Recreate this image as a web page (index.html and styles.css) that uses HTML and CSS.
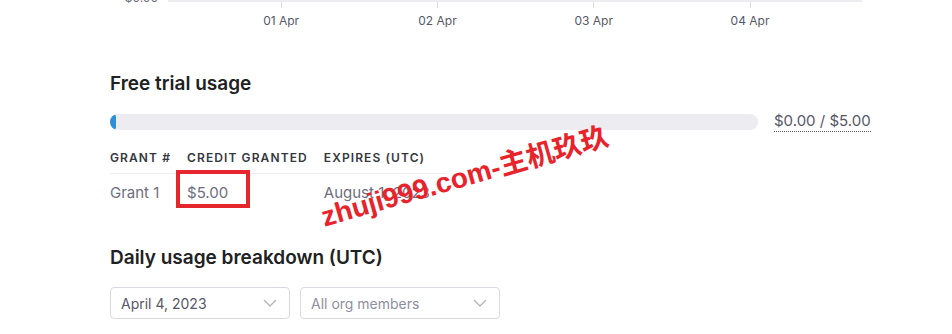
FILE: index.html
```html
<!DOCTYPE html>
<html lang="en">
<head>
<meta charset="utf-8">
<title>Usage</title>
<link rel="stylesheet" href="styles.css">
</head>
<body>
<main class="page">
  <section class="chart">
    <div class="ylabel">$0.00</div>
    <div class="plot">
      <div class="tick"><span class="tick-line"></span><span class="tick-label">01 Apr</span></div>
      <div class="tick"><span class="tick-line"></span><span class="tick-label">02 Apr</span></div>
      <div class="tick"><span class="tick-line"></span><span class="tick-label">03 Apr</span></div>
      <div class="tick"><span class="tick-line"></span><span class="tick-label">04 Apr</span></div>
    </div>
  </section>

  <h2 class="heading heading-trial">Free trial usage</h2>
  <div class="progress-row">
    <div class="progress"><div class="progress-fill"></div></div>
    <span class="progress-text">$0.00 / $5.00</span>
  </div>

  <table class="grants">
    <thead>
      <tr><th>Grant #</th><th>Credit granted</th><th>Expires (UTC)</th></tr>
    </thead>
    <tbody>
      <tr><td>Grant 1</td><td class="credit"><span class="highlight"></span>$5.00</td><td>August 1, 2023</td></tr>
    </tbody>
  </table>

  <h2 class="heading heading-daily">Daily usage breakdown (UTC)</h2>
  <div class="filters">
    <div class="select select-date"><span class="select-value">April 4, 2023</span>
      <svg class="chev" width="14" height="8" viewBox="0 0 14 8"><path d="M1 1l6 6 6-6" fill="none" stroke="#b4b4bd" stroke-width="1.3"/></svg>
    </div>
    <div class="select select-members"><span class="select-placeholder">All org members</span>
      <svg class="chev" width="14" height="8" viewBox="0 0 14 8"><path d="M1 1l6 6 6-6" fill="none" stroke="#b4b4bd" stroke-width="1.3"/></svg>
    </div>
  </div>

  <div class="watermark">zhuji999.com-主机玖玖</div>
</main>
</body>
</html>
```

FILE: styles.css
```css
* { box-sizing: border-box; }
html, body { margin: 0; padding: 0; background: #fff; }
body {
  font-family: Inter, "Noto Sans", "Liberation Sans", sans-serif;
  color: #353740;
  width: 952px;
  height: 334px;
  overflow: hidden;
}
.page {
  position: relative;
  padding-left: 110px;
  height: 334px;
}

/* chart axis */
.chart {
  display: flex;
  margin-top: -10px;
}
.ylabel {
  width: 58px;
  padding-right: 10px;
  text-align: right;
  font-size: 12px;
  line-height: 16px;
  color: #6e6e80;
}
.plot {
  margin-top: 10px;
  width: 694px;
  border-top: 2px solid #ececf1;
  display: grid;
  grid-template-columns: repeat(4, 156.3px);
  padding-left: 35px;
}
.tick {
  display: flex;
  flex-direction: column;
  align-items: center;
}
.tick-line {
  width: 1px;
  height: 6px;
  background: #dcdce2;
}
.tick-label {
  margin-top: 5px;
  font-size: 12px;
  line-height: 16px;
  color: #565869;
}

/* headings */
.heading {
  margin: 0;
  font-size: 19px;
  line-height: 24px;
  font-weight: 600;
  color: #202123;
}
.heading-trial { margin-top: 43px; }
.heading-daily { margin-top: 43px; }

/* progress */
.progress-row {
  display: flex;
  align-items: center;
  gap: 16px;
  margin-top: 15px;
}
.progress {
  width: 648px;
  height: 16px;
  border-radius: 8px;
  background: #ececf1;
  overflow: hidden;
}
.progress-fill {
  width: 6px;
  height: 16px;
  border-radius: 3px;
  background: #2e8fd8;
}
.progress-text {
  font-size: 15px;
  line-height: 20px;
  color: #565869;
  border-bottom: 1px dotted #565869;
}

/* table */
.grants {
  margin-top: 18px;
  border-collapse: collapse;
}
.grants th {
  text-align: left;
  font-size: 12px;
  font-weight: 600;
  letter-spacing: 1.1px;
  text-transform: uppercase;
  color: #353740;
  padding: 0 16px 7px 0;
  line-height: 16px;
  border-bottom: 1px solid #ececf1;
}
.grants th:last-child { padding-right: 4px; }
.grants td {
  font-size: 15px;
  line-height: 20px;
  color: #6e6e80;
  padding: 9px 16px 0 0;
}
.grants .credit { position: relative; }
.highlight {
  position: absolute;
  left: -11px;
  top: -4px;
  width: 74px;
  height: 38px;
  border: 4px solid #e5262c;
}

/* filters */
.filters {
  display: flex;
  gap: 10px;
  margin-top: 17px;
}
.select {
  height: 32px;
  border: 1px solid #d9d9e3;
  border-radius: 4px;
  display: flex;
  align-items: center;
  justify-content: space-between;
  padding: 0 12px 0 10px;
  font-size: 14px;
}
.select-date { width: 180px; }
.select-members { width: 200px; }
.select-value { color: #565869; }
.select-placeholder { color: #8e8ea0; }

/* watermark overlay */
.watermark {
  position: absolute;
  left: 322px;
  top: 213px;
  transform: rotate(-16deg);
  transform-origin: left center;
  font-family: "Liberation Sans", "Noto Sans CJK SC", sans-serif;
  font-weight: 700;
  font-size: 28px;
  line-height: 30px;
  color: #e8232b;
  white-space: nowrap;
}
```
